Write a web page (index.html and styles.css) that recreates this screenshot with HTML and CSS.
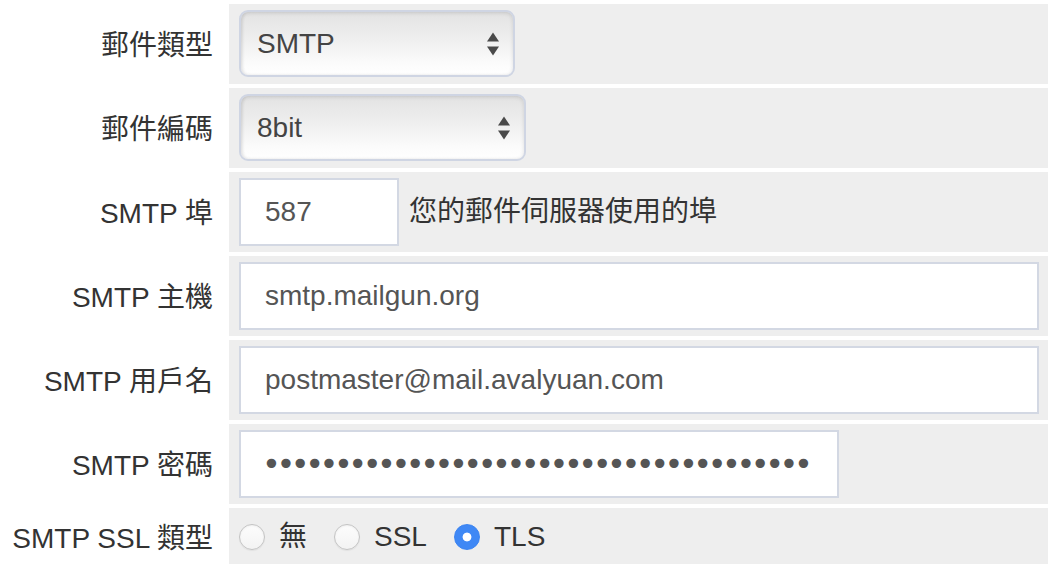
FILE: index.html
```html
<!DOCTYPE html>
<html lang="zh-Hant">
<head>
<meta charset="utf-8">
<title>SMTP 設定</title>
<link rel="stylesheet" href="styles.css">
</head>
<body>
<form class="settings">
  <div class="row">
    <label class="label" for="mailtype">郵件類型</label>
    <div class="field">
      <div class="select-wrap w-type">
        <select id="mailtype" class="select">
          <option>SMTP</option>
          <option>PHP mail</option>
        </select>
        <span class="arrows"><span class="up"></span><span class="down"></span></span>
      </div>
    </div>
  </div>
  <div class="row">
    <label class="label" for="encoding">郵件編碼</label>
    <div class="field">
      <div class="select-wrap w-enc">
        <select id="encoding" class="select">
          <option>8bit</option>
          <option>7bit</option>
        </select>
        <span class="arrows"><span class="up"></span><span class="down"></span></span>
      </div>
    </div>
  </div>
  <div class="row">
    <label class="label" for="port">SMTP 埠</label>
    <div class="field">
      <input id="port" class="input w-port" type="text" value="587">
      <span class="help">您的郵件伺服器使用的埠</span>
    </div>
  </div>
  <div class="row">
    <label class="label" for="host">SMTP 主機</label>
    <div class="field">
      <input id="host" class="input w-wide" type="text" value="smtp.mailgun.org">
    </div>
  </div>
  <div class="row">
    <label class="label" for="user">SMTP 用戶名</label>
    <div class="field">
      <input id="user" class="input w-wide" type="text" value="postmaster@mail.avalyuan.com">
    </div>
  </div>
  <div class="row">
    <label class="label" for="pass">SMTP 密碼</label>
    <div class="field">
      <input id="pass" class="input w-pass" type="password" value="abcdefghijklmnopqrstuvwxyz0123456789ab">
    </div>
  </div>
  <div class="row row-short">
    <span class="label">SMTP SSL 類型</span>
    <div class="field radios">
      <label class="radio-item"><input type="radio" name="ssl" class="radio"><span>無</span></label>
      <label class="radio-item"><input type="radio" name="ssl" class="radio"><span>SSL</span></label>
      <label class="radio-item"><input type="radio" name="ssl" class="radio" checked><span>TLS</span></label>
    </div>
  </div>
</form>
</body>
</html>
```

FILE: styles.css
```css
html {
  overflow: hidden;
}
body {
  margin: 0;
  background: #fff;
  font-family: "Liberation Sans", Helvetica, Arial, "Noto Sans CJK TC", sans-serif;
  font-size: 28px;
  color: #333;
}
.settings {
  display: grid;
  row-gap: 4px;
  padding-top: 4px;
}
.row {
  display: grid;
  grid-template-columns: 229px 1fr;
  height: 80px;
}
.row-short {
  height: 58px;
}
.label {
  display: flex;
  align-items: center;
  justify-content: flex-end;
  padding-right: 16px;
  padding-top: 3px;
  line-height: 34px;
  white-space: nowrap;
  color: #333;
}
.field {
  background: #eee;
  display: flex;
  align-items: flex-start;
  padding: 6px 10px;
}
.select-wrap {
  position: relative;
  height: 67px;
}
.w-type { width: 276px; }
.w-enc { width: 287px; }
.select {
  appearance: none;
  -webkit-appearance: none;
  width: 100%;
  height: 100%;
  box-sizing: border-box;
  border: 2px solid #cfd5e3;
  border-radius: 9px;
  background: linear-gradient(#e3e3e3 0%, #efefef 45%, #fbfbfb 80%, #fff 100%);
  box-shadow: inset 0 1px 4px rgba(0, 0, 0, 0.12), inset 2px 0 3px rgba(0, 0, 0, 0.05);
  font: inherit;
  font-size: 28px;
  color: #444;
  padding: 0 40px 0 16px;
  outline: none;
}
.arrows {
  position: absolute;
  right: 16px;
  top: 50%;
  transform: translateY(-50%);
  display: flex;
  flex-direction: column;
  gap: 5px;
  pointer-events: none;
}
.arrows .up,
.arrows .down {
  width: 0;
  height: 0;
  border-left: 6px solid transparent;
  border-right: 6px solid transparent;
}
.arrows .up { border-bottom: 9px solid #4a4a4a; }
.arrows .down { border-top: 9px solid #4a4a4a; }
.input {
  box-sizing: border-box;
  height: 68px;
  border: 2px solid #d3d8e3;
  background: #fff;
  font: inherit;
  font-size: 28px;
  color: #555;
  padding: 0 24px;
  outline: none;
}
.w-port { width: 160px; }
.w-wide { width: 800px; }
.w-pass {
  width: 600px;
  padding: 0 6px 0 21px;
  font-family: "DejaVu Sans", sans-serif;
  font-size: 32px;
  letter-spacing: -4.5px;
  color: #555;
}
.help {
  align-self: center;
  margin-left: 10px;
  line-height: 34px;
  color: #333;
  white-space: nowrap;
}
.radios {
  align-items: center;
  padding-top: 0;
  padding-bottom: 0;
}
.radio-item {
  display: flex;
  align-items: center;
  height: 38px;
  margin-right: 27px;
  color: #333;
  line-height: 34px;
}
.radio {
  appearance: none;
  -webkit-appearance: none;
  width: 26px;
  height: 26px;
  margin: 0 14px 0 0;
  border-radius: 50%;
  border: 1px solid #c4c4c4;
  background: linear-gradient(#fdfdfd, #f3f3f3);
  box-shadow: inset 0 1px 2px rgba(0, 0, 0, 0.06), 0 1px 1px rgba(0, 0, 0, 0.05);
  box-sizing: border-box;
  flex: none;
}
.radio:checked {
  border-color: #3a83f1;
  background: radial-gradient(circle, #fff 0 4px, #3f88f5 4.8px);
  box-shadow: none;
}
```
